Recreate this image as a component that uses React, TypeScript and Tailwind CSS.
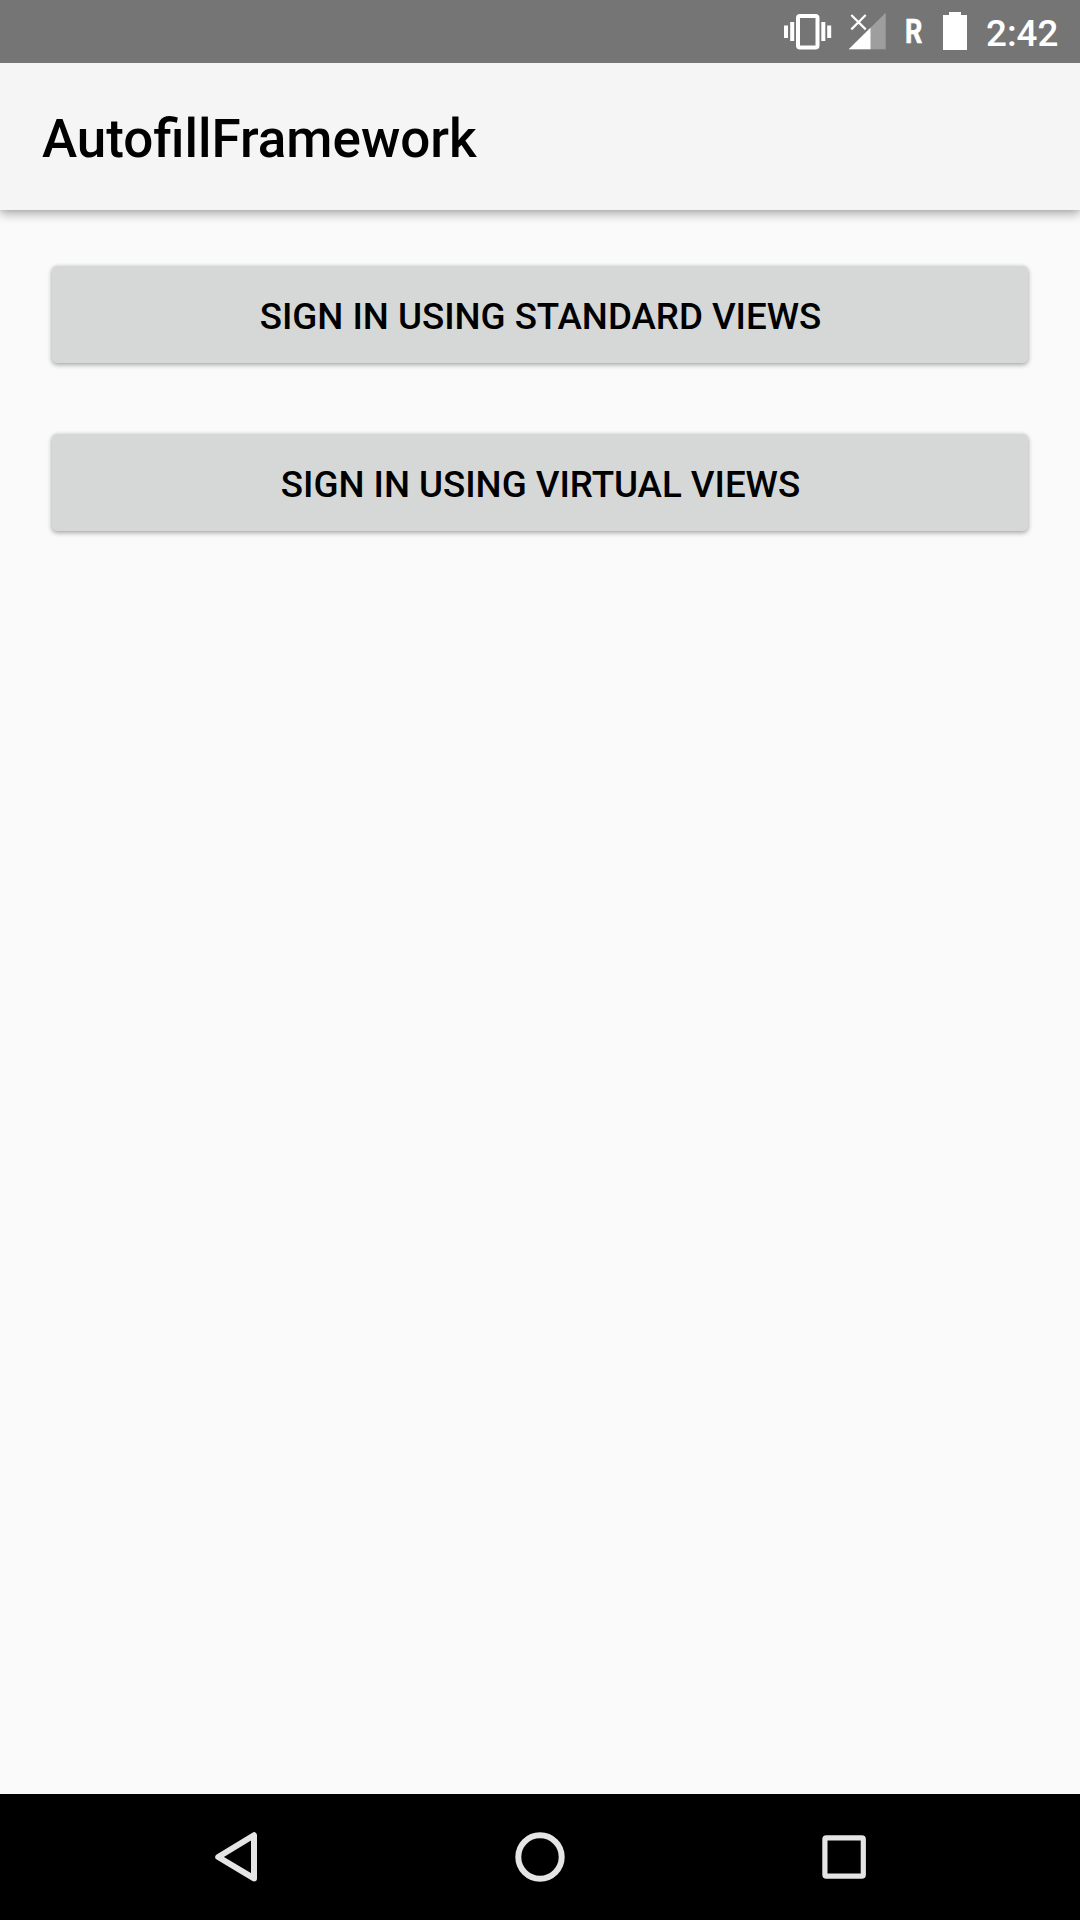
function StatusBar() {
  return (
    <div className="relative z-10 flex h-[63px] w-full items-start bg-[#757575] text-white">
      <svg className="h-[63px] w-[130px] ml-[770px] shrink-0" viewBox="770 0 130 63" fill="#fff">
        <rect x="784" y="25.5" width="4" height="12.5" />
        <rect x="790.2" y="22" width="4" height="19" />
        <rect x="798" y="16" width="19.5" height="31.5" rx="2" fill="none" stroke="#fff" strokeWidth="4" />
        <rect x="821.3" y="22" width="4" height="19" />
        <rect x="827.2" y="25.5" width="4" height="12.5" />
        <path d="M885.7 12.7V49.3H848.7Z" fillOpacity="0.3" />
        <path d="M870.5 27.8V49.3H848.7Z" />
        <path d="M851.3 15L865.7 29.4M865.7 15L851.3 29.4" stroke="#fff" strokeWidth="2.2" />
      </svg>
      <span className="ml-[5px] mt-[13px] w-[20px] origin-left scale-x-[0.82] text-[33px] leading-[37px] font-bold [-webkit-text-stroke:0.6px_#fff]">R</span>
      <svg className="ml-[18px] h-[63px] w-[24px] shrink-0" viewBox="943 0 24 63" fill="#fff">
        <path d="M949 12h12v3h6v35h-24V15h6Z" />
      </svg>
      <span className="ml-[19px] mt-[12px] text-[36.75px] leading-[43px] font-medium">2:42</span>
    </div>
  );
}

function ActionButton({ label }: { label: string }) {
  return (
    <button className="flex h-[97px] w-full items-center justify-center rounded-[5px] bg-[#d6d8d7] pt-[4px] pl-[1px] text-[36.75px] leading-[43px] font-medium tracking-[-0.04px] uppercase shadow-[0_2px_5px_rgba(0,0,0,0.3),0_0_4px_rgba(0,0,0,0.1)]">
      {label}
    </button>
  );
}

function NavigationBar() {
  return (
    <nav className="flex h-[126px] items-center bg-black">
      <svg className="h-[126px] w-full" viewBox="0 1794 1080 126" fill="none" stroke="#e5e5e5">
        <path d="M254 1835.2V1878.4L218.2 1857Z" strokeWidth="6" strokeLinejoin="round" />
        <circle cx="540" cy="1857" r="21.7" strokeWidth="6" />
        <rect x="824.9" y="1837.8" width="38.4" height="38.4" rx="1.5" strokeWidth="5.2" />
      </svg>
    </nav>
  );
}

export default function App() {
  return (
    <div className="flex h-[1920px] w-[1080px] flex-col overflow-hidden bg-[#fafafa] font-[Roboto,sans-serif] text-black">
      <StatusBar />
      <header className="flex h-[147px] items-center bg-[#f5f5f5] px-[42px] pt-[5px] shadow-[0_4px_10px_rgba(0,0,0,0.3),0_0_5px_rgba(0,0,0,0.1)]">
        <h1 className="text-[53px] leading-[62px] font-medium">AutofillFramework</h1>
      </header>
      <main className="flex flex-1 flex-col gap-[71px] px-[52px] pt-[56px]">
        <ActionButton label="Sign in using standard views" />
        <ActionButton label="Sign in using virtual views" />
      </main>
      <NavigationBar />
    </div>
  );
}
